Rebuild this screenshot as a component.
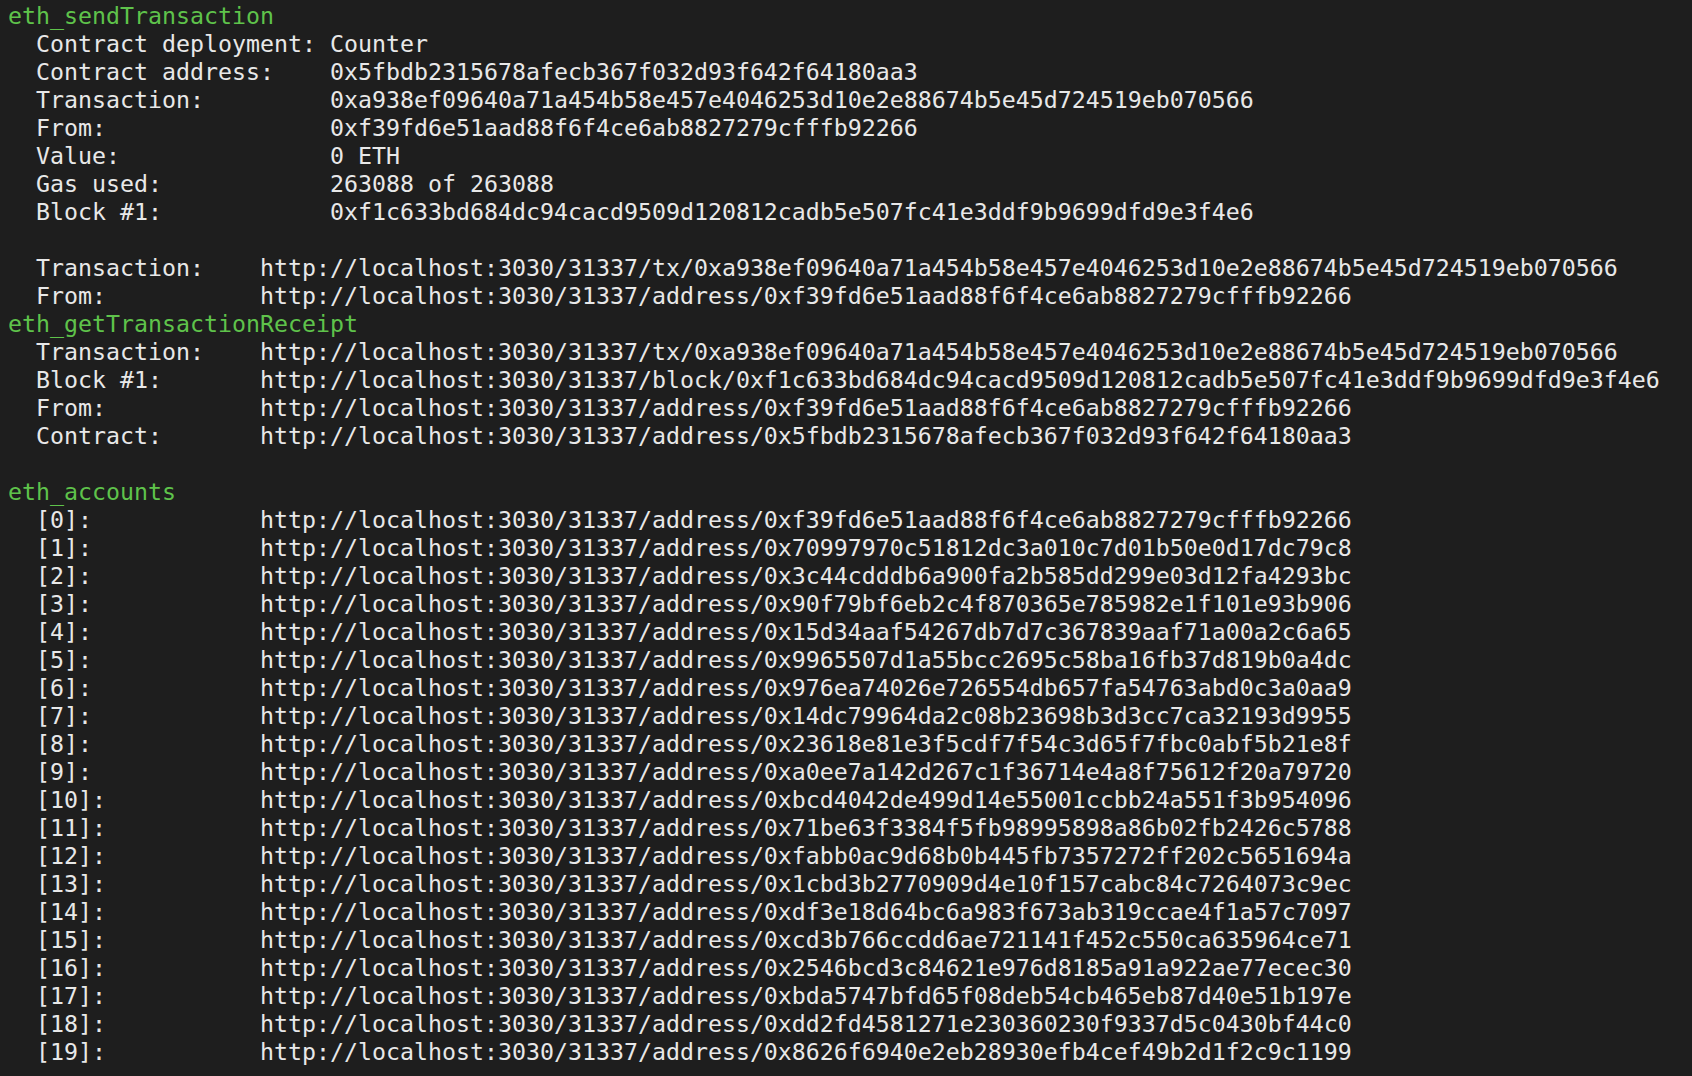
import React from 'react';

type Row = { label: string; value: string };

const base = 'http://localhost:3030/31337';

const deployment: Row[] = [
    { label: 'Contract deployment:', value: 'Counter' },
    { label: 'Contract address:', value: '0x5fbdb2315678afecb367f032d93f642f64180aa3' },
    { label: 'Transaction:', value: '0xa938ef09640a71a454b58e457e4046253d10e2e88674b5e45d724519eb070566' },
    { label: 'From:', value: '0xf39fd6e51aad88f6f4ce6ab8827279cfffb92266' },
    { label: 'Value:', value: '0 ETH' },
    { label: 'Gas used:', value: '263088 of 263088' },
    { label: 'Block #1:', value: '0xf1c633bd684dc94cacd9509d120812cadb5e507fc41e3ddf9b9699dfd9e3f4e6' },
];

const sendLinks: Row[] = [
    { label: 'Transaction:', value: `${base}/tx/0xa938ef09640a71a454b58e457e4046253d10e2e88674b5e45d724519eb070566` },
    { label: 'From:', value: `${base}/address/0xf39fd6e51aad88f6f4ce6ab8827279cfffb92266` },
];

const receipt: Row[] = [
    { label: 'Transaction:', value: `${base}/tx/0xa938ef09640a71a454b58e457e4046253d10e2e88674b5e45d724519eb070566` },
    { label: 'Block #1:', value: `${base}/block/0xf1c633bd684dc94cacd9509d120812cadb5e507fc41e3ddf9b9699dfd9e3f4e6` },
    { label: 'From:', value: `${base}/address/0xf39fd6e51aad88f6f4ce6ab8827279cfffb92266` },
    { label: 'Contract:', value: `${base}/address/0x5fbdb2315678afecb367f032d93f642f64180aa3` },
];

const accounts = [
    '0xf39fd6e51aad88f6f4ce6ab8827279cfffb92266',
    '0x70997970c51812dc3a010c7d01b50e0d17dc79c8',
    '0x3c44cdddb6a900fa2b585dd299e03d12fa4293bc',
    '0x90f79bf6eb2c4f870365e785982e1f101e93b906',
    '0x15d34aaf54267db7d7c367839aaf71a00a2c6a65',
    '0x9965507d1a55bcc2695c58ba16fb37d819b0a4dc',
    '0x976ea74026e726554db657fa54763abd0c3a0aa9',
    '0x14dc79964da2c08b23698b3d3cc7ca32193d9955',
    '0x23618e81e3f5cdf7f54c3d65f7fbc0abf5b21e8f',
    '0xa0ee7a142d267c1f36714e4a8f75612f20a79720',
    '0xbcd4042de499d14e55001ccbb24a551f3b954096',
    '0x71be63f3384f5fb98995898a86b02fb2426c5788',
    '0xfabb0ac9d68b0b445fb7357272ff202c5651694a',
    '0x1cbd3b2770909d4e10f157cabc84c7264073c9ec',
    '0xdf3e18d64bc6a983f673ab319ccae4f1a57c7097',
    '0xcd3b766ccdd6ae721141f452c550ca635964ce71',
    '0x2546bcd3c84621e976d8185a91a922ae77ecec30',
    '0xbda5747bfd65f08deb54cb465eb87d40e51b197e',
    '0xdd2fd4581271e230360230f9337d5c0430bf44c0',
    '0x8626f6940e2eb28930efb4cef49b2d1f2c9c1199',
];

const Heading: React.FC<{ text: string }> = ({ text }) => (
    <div className="h-[28px] text-[#5fc34b]">{text}</div>
);

const Line: React.FC<{ row: Row; pad: number }> = ({ row, pad }) => (
    <div className="h-[28px]">{'  ' + row.label.padEnd(pad, ' ') + row.value}</div>
);

const Blank = () => <div className="h-[28px]" />;

export default function App() {
    return (
        <div
            className="w-[1692px] h-[1076px] overflow-hidden bg-[#1e1e1e] text-[#e8e8e8] text-[23.25px] leading-[28px] whitespace-pre pl-[8px] pt-[2px]"
            style={{ fontFamily: '"DejaVu Sans Mono", "Liberation Mono", monospace' }}
        >
            <Heading text="eth_sendTransaction" />
            {deployment.map((r, i) => (
                <Line key={i} row={r} pad={21} />
            ))}
            <Blank />
            {sendLinks.map((r, i) => (
                <Line key={i} row={r} pad={16} />
            ))}
            <Heading text="eth_getTransactionReceipt" />
            {receipt.map((r, i) => (
                <Line key={i} row={r} pad={16} />
            ))}
            <Blank />
            <Heading text="eth_accounts" />
            {accounts.map((a, i) => (
                <Line key={i} row={{ label: `[${i}]:`, value: `${base}/address/${a}` }} pad={16} />
            ))}
        </div>
    );
}
